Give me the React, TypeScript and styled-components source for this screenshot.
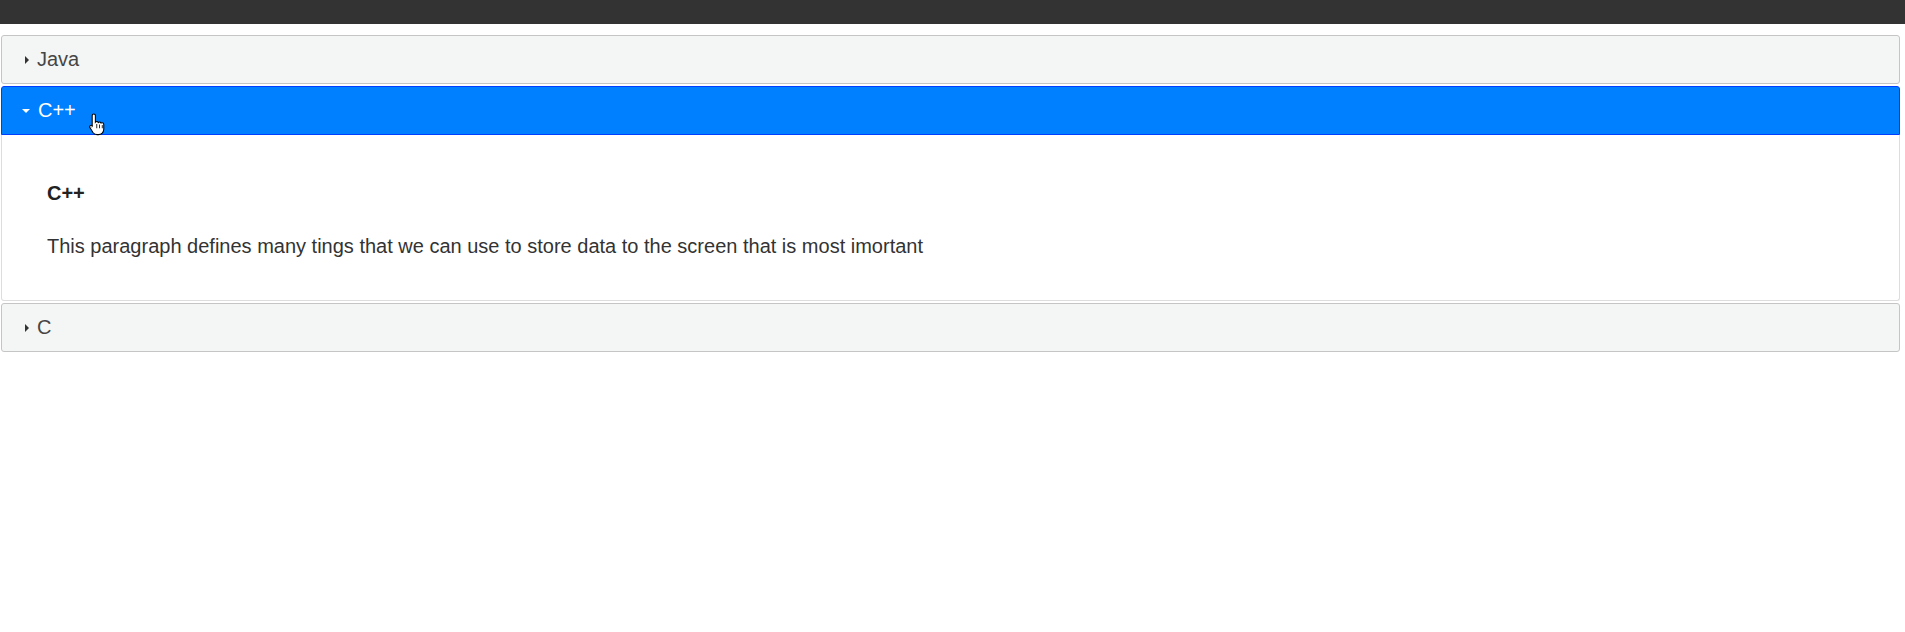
import React, { useState } from "react";
import styled, { createGlobalStyle } from "styled-components";

const Global = createGlobalStyle`
  html, body { margin: 0; padding: 0; background: #fff; }
  body { font-family: "Liberation Sans", Arial, sans-serif; }
`;

const TopBar = styled.div`
  height: 24px;
  background: #333333;
`;

const Accordion = styled.div`
  margin: 11px 0 0 1px;
  width: 1899px;
`;

const Header = styled.div<{ $active: boolean }>`
  position: relative;
  box-sizing: border-box;
  height: 49px;
  margin-top: 2px;
  display: flex;
  align-items: center;
  gap: 7px;
  padding-left: ${(p) => (p.$active ? "20px" : "23px")};
  border: 1px solid ${(p) => (p.$active ? "#003eff" : "#c5c5c5")};
  border-radius: ${(p) => (p.$active ? "3px 3px 0 0" : "3px")};
  background: ${(p) => (p.$active ? "#007fff" : "#f4f5f5")};
  color: ${(p) => (p.$active ? "#ffffff" : "#454545")};
  font-size: 20px;
  cursor: pointer;
  user-select: none;
`;

const Arrow = styled.span<{ $open: boolean }>`
  width: 0;
  height: 0;
  ${(p) =>
    p.$open
      ? `border-left: 4px solid transparent; border-right: 4px solid transparent; border-top: 4px solid #ffffff; margin-right: 1px;`
      : `border-top: 4px solid transparent; border-bottom: 4px solid transparent; border-left: 4px solid #333333; margin-right: 1px;`}
`;

const Panel = styled.div`
  box-sizing: border-box;
  height: 166px;
  border: 1px solid #dddddd;
  border-top: 0;
  border-radius: 0 0 3px 3px;
  background: #fff;
  padding: 47px 0 0 45px;
  color: #333333;
  font-size: 20px;
`;

const PanelTitle = styled.h4`
  margin: 0 0 30px 0;
  font-size: 20px;
  font-weight: bold;
  color: #222;
`;

const PanelText = styled.p`
  margin: 0;
  font-size: 20px;
`;

const Cursor = styled.svg`
  position: absolute;
  left: 87px;
  top: 25px;
  width: 17px;
  height: 24px;
  pointer-events: none;
`;

const items = [
  { title: "Java", text: "" },
  {
    title: "C++",
    text: "This paragraph defines many tings that we can use to store data to the screen that is most imortant",
  },
  { title: "C", text: "" },
];

export default function App() {
  const [open, setOpen] = useState(1);
  return (
    <>
      <Global />
      <TopBar />
      <Accordion>
        {items.map((it, i) => (
          <React.Fragment key={it.title}>
            <Header $active={open === i} onClick={() => setOpen(i)}>
              <Arrow $open={open === i} />
              {it.title}
              {i === 1 && (
                <Cursor viewBox="0 0 16 22">
                  <path
                    d="M4.5 1.5c.8 0 1.5.7 1.5 1.5v6.2c.3-.4.8-.6 1.3-.6.7 0 1.2.4 1.4 1 .3-.3.7-.5 1.2-.5.7 0 1.2.4 1.4 1 .3-.2.6-.3 1-.3.9 0 1.6.7 1.6 1.6v4.6c0 2.8-2.2 5-5 5H7.6c-1.6 0-3-.8-3.9-2L1 14.6c-.5-.7-.4-1.6.3-2.1.6-.4 1.4-.3 1.9.2L3 13V3c0-.8.7-1.5 1.5-1.5z"
                    fill="#ffffff"
                    stroke="#000000"
                    strokeWidth="1"
                  />
                  <path d="M7.3 11v4M9.9 11.5v3.5M12.5 12v3" stroke="#000" strokeWidth="0.8" />
                </Cursor>
              )}
            </Header>
            {open === i && it.text && (
              <Panel>
                <PanelTitle>{it.title}</PanelTitle>
                <PanelText>{it.text}</PanelText>
              </Panel>
            )}
          </React.Fragment>
        ))}
      </Accordion>
    </>
  );
}
